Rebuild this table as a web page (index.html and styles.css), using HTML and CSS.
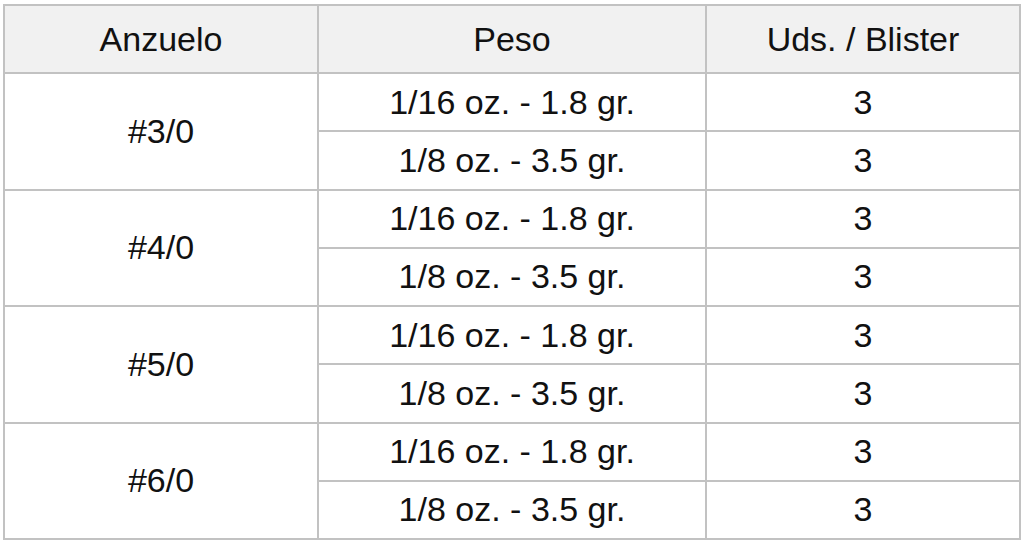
FILE: index.html
```html
<!DOCTYPE html>
<html lang="es">
<head>
<meta charset="utf-8">
<link rel="stylesheet" href="styles.css">
</head>
<body>
<table class="spec">
  <colgroup>
    <col class="c1"><col class="c2"><col class="c3">
  </colgroup>
  <thead>
    <tr><th>Anzuelo</th><th>Peso</th><th>Uds. / Blister</th></tr>
  </thead>
  <tbody>
    <tr><td rowspan="2">#3/0</td><td>1/16 oz. - 1.8 gr.</td><td>3</td></tr>
    <tr><td>1/8 oz. - 3.5 gr.</td><td>3</td></tr>
    <tr><td rowspan="2">#4/0</td><td>1/16 oz. - 1.8 gr.</td><td>3</td></tr>
    <tr><td>1/8 oz. - 3.5 gr.</td><td>3</td></tr>
    <tr><td rowspan="2">#5/0</td><td>1/16 oz. - 1.8 gr.</td><td>3</td></tr>
    <tr><td>1/8 oz. - 3.5 gr.</td><td>3</td></tr>
    <tr><td rowspan="2">#6/0</td><td>1/16 oz. - 1.8 gr.</td><td>3</td></tr>
    <tr><td>1/8 oz. - 3.5 gr.</td><td>3</td></tr>
  </tbody>
</table>
</body>
</html>
```

FILE: styles.css
```css
html, body {
  margin: 0;
  padding: 0;
  background: #ffffff;
}
body {
  padding: 4px 0 0 3px;
  font-family: "Liberation Sans", Arial, sans-serif;
  color: #111111;
}
.spec {
  border-collapse: collapse;
  table-layout: fixed;
  width: 1016px;
  font-size: 34px;
}
.spec .c1 { width: 314px; }
.spec .c2 { width: 388px; }
.spec .c3 { width: 314px; }
.spec th,
.spec td {
  border: 2px solid #c2c2c2;
  text-align: center;
  vertical-align: middle;
  padding: 0;
  font-weight: normal;
}
.spec thead tr { height: 68px; }
.spec thead th { background: #f1f1f1; }
.spec tbody tr { height: 58.25px; }
```
